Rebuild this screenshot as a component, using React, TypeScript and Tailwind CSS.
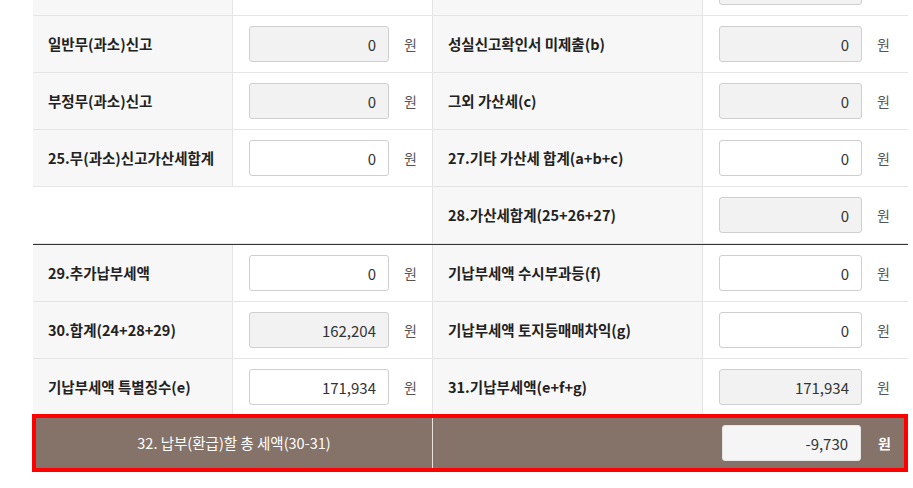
import clsx from 'clsx';

type Cell =
  | { kind: 'label'; text?: string }
  | { kind: 'field'; value?: string; disabled?: boolean; wide?: boolean; hideUnit?: boolean }
  | { kind: 'blank'; span: number };

type Row = { cells: Cell[]; topDark?: boolean; last?: boolean };

const rows: Row[] = [
  {
    cells: [
      { kind: 'label' },
      { kind: 'field' },
      { kind: 'label' },
      { kind: 'field', value: '', disabled: true, wide: true, hideUnit: true },
    ],
  },
  {
    cells: [
      { kind: 'label', text: '일반무(과소)신고' },
      { kind: 'field', value: '0', disabled: true },
      { kind: 'label', text: '성실신고확인서 미제출(b)' },
      { kind: 'field', value: '0', disabled: true, wide: true },
    ],
  },
  {
    cells: [
      { kind: 'label', text: '부정무(과소)신고' },
      { kind: 'field', value: '0', disabled: true },
      { kind: 'label', text: '그외 가산세(c)' },
      { kind: 'field', value: '0', disabled: true, wide: true },
    ],
  },
  {
    cells: [
      { kind: 'label', text: '25.무(과소)신고가산세합계' },
      { kind: 'field', value: '0' },
      { kind: 'label', text: '27.기타 가산세 합계(a+b+c)' },
      { kind: 'field', value: '0', wide: true },
    ],
  },
  {
    cells: [
      { kind: 'blank', span: 2 },
      { kind: 'label', text: '28.가산세합계(25+26+27)' },
      { kind: 'field', value: '0', disabled: true, wide: true },
    ],
  },
  {
    topDark: true,
    cells: [
      { kind: 'label', text: '29.추가납부세액' },
      { kind: 'field', value: '0' },
      { kind: 'label', text: '기납부세액 수시부과등(f)' },
      { kind: 'field', value: '0', wide: true },
    ],
  },
  {
    cells: [
      { kind: 'label', text: '30.합계(24+28+29)' },
      { kind: 'field', value: '162,204', disabled: true },
      { kind: 'label', text: '기납부세액 토지등매매차익(g)' },
      { kind: 'field', value: '0', wide: true },
    ],
  },
  {
    last: true,
    cells: [
      { kind: 'label', text: '기납부세액 특별징수(e)' },
      { kind: 'field', value: '171,934' },
      { kind: 'label', text: '31.기납부세액(e+f+g)' },
      { kind: 'field', value: '171,934', disabled: true, wide: true },
    ],
  },
];

function Amount({ value, disabled, wide }: { value: string; disabled?: boolean; wide?: boolean }) {
  return (
    <input
      readOnly
      value={value}
      className={clsx(
        'h-9 rounded-[3px] border border-[#cfcfcf] pr-3 text-right text-[15px] text-[#333] outline-none',
        wide ? 'w-[143px]' : 'w-[140px]',
        disabled ? 'bg-[#f2f2f2]' : 'bg-white'
      )}
    />
  );
}

export default function App() {
  return (
    <div className="min-h-screen bg-white font-['Noto_Sans_CJK_KR','Noto_Sans',sans-serif]">
      <div className="h-[414px] overflow-hidden">
        <div className="-mt-[41px] ml-[33px] w-[875px]">
          {rows.map((row, i) => (
            <div
              key={i}
              className={clsx(
                'grid grid-cols-[200px_200px_270px_205px]',
                row.last ? 'h-[56px]' : 'border-b border-[#e5e5e5]',
                row.topDark ? 'h-[58px] border-t border-t-[#333]' : !row.last && 'h-[57px]'
              )}
            >
              {row.cells.map((c, j) => {
                if (c.kind === 'blank')
                  return <div key={j} className="col-span-2 border-r border-[#e5e5e5] bg-white" />;
                if (c.kind === 'label')
                  return (
                    <div
                      key={j}
                      className="flex items-center border-r border-[#e5e5e5] bg-[#f7f7f7] px-[15px] text-[14.5px] font-bold text-[#222]"
                    >
                      {c.text}
                    </div>
                  );
                return (
                  <div key={j} className={clsx('flex items-center bg-white pl-4', j === 1 && 'border-r border-[#e5e5e5]')}>
                    {c.value !== undefined && (
                      <>
                        <Amount value={c.value} disabled={c.disabled} wide={c.wide} />
                        {!c.hideUnit && <span className="ml-[15px] text-[14px] text-[#555]">원</span>}
                      </>
                    )}
                  </div>
                );
              })}
            </div>
          ))}
        </div>
      </div>

      {/* 32. 납부(환급)할 총 세액 */}
      <div className="ml-[32px] w-[876px] border-4 border-[#ff0000]">
        <div className="grid h-[50px] grid-cols-[397px_1fr] bg-[#857369]">
          <div className="flex items-center justify-center border-r border-[#e8e2de] text-[14.5px] text-white">
            32. 납부(환급)할 총 세액(30-31)
          </div>
          <div className="flex items-center justify-end pr-[13px]">
            <input
              readOnly
              value="-9,730"
              className="h-9 w-[139px] rounded-[3px] border border-[#e6e6e6] bg-[#f5f5f5] pr-3 text-right text-[15px] text-[#333] outline-none"
            />
            <span className="ml-[17px] text-[14px] font-bold text-white">원</span>
          </div>
        </div>
      </div>
    </div>
  );
}
